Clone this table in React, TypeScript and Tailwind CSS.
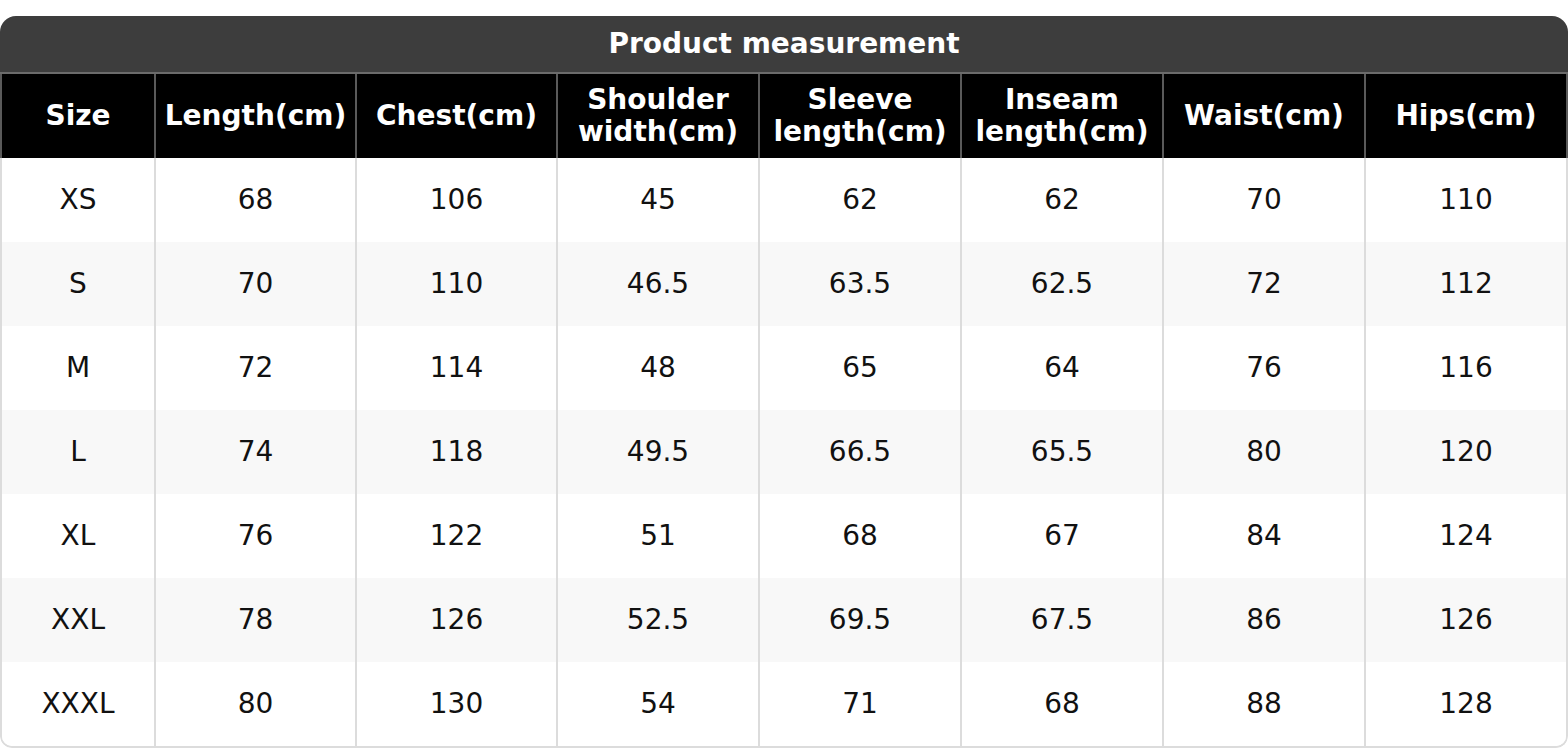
const columns = [
  ['Size'],
  ['Length(cm)'],
  ['Chest(cm)'],
  ['Shoulder', 'width(cm)'],
  ['Sleeve', 'length(cm)'],
  ['Inseam', 'length(cm)'],
  ['Waist(cm)'],
  ['Hips(cm)'],
]

const rows = [
  ['XS', '68', '106', '45', '62', '62', '70', '110'],
  ['S', '70', '110', '46.5', '63.5', '62.5', '72', '112'],
  ['M', '72', '114', '48', '65', '64', '76', '116'],
  ['L', '74', '118', '49.5', '66.5', '65.5', '80', '120'],
  ['XL', '76', '122', '51', '68', '67', '84', '124'],
  ['XXL', '78', '126', '52.5', '69.5', '67.5', '86', '126'],
  ['XXXL', '80', '130', '54', '71', '68', '88', '128'],
]

// outer border-x-2 takes 2px a side; widths tuned so the rules land where the picture has them
const grid = 'grid grid-cols-[154px_201px_201px_202px_202px_202px_202px_200px]'

export default function App() {
  return (
    <div className="w-[1568px] h-[748px] bg-white pt-[16px] font-['DejaVu_Sans',sans-serif] text-[28px]">
      <div className="rounded-t-[16px] rounded-b-[12px] overflow-hidden">
        <div className="h-[58px] bg-[#3d3d3d] flex items-center justify-center text-white font-bold leading-none border-b-2 border-[#6b6b6b]">
          Product measurement
        </div>
        <div className="border-x-2 border-[#5a5a5a] bg-black">
          <div className={`${grid} h-[84px]`}>
            {columns.map((lines, i) => (
              <div
                key={i}
                className={`flex flex-col items-center justify-center text-white font-bold leading-[32px] ${i < columns.length - 1 ? 'border-r-2 border-[#5a5a5a]' : ''}`}
              >
                {lines.map((l) => (
                  <span key={l}>{l}</span>
                ))}
              </div>
            ))}
          </div>
        </div>
        <div className="border-x-2 border-b-2 border-[#dcdcdc] rounded-b-[12px] overflow-hidden">
          {rows.map((row, r) => (
            <div key={r} className={`${grid} h-[84px] ${r % 2 === 1 ? 'bg-[#f8f8f8]' : 'bg-white'}`}>
              {row.map((cell, i) => (
                <div
                  key={i}
                  className={`flex items-center justify-center text-[#111] ${i < row.length - 1 ? 'border-r-2 border-[#dcdcdc]' : ''}`}
                >
                  {cell}
                </div>
              ))}
            </div>
          ))}
        </div>
      </div>
    </div>
  )
}
